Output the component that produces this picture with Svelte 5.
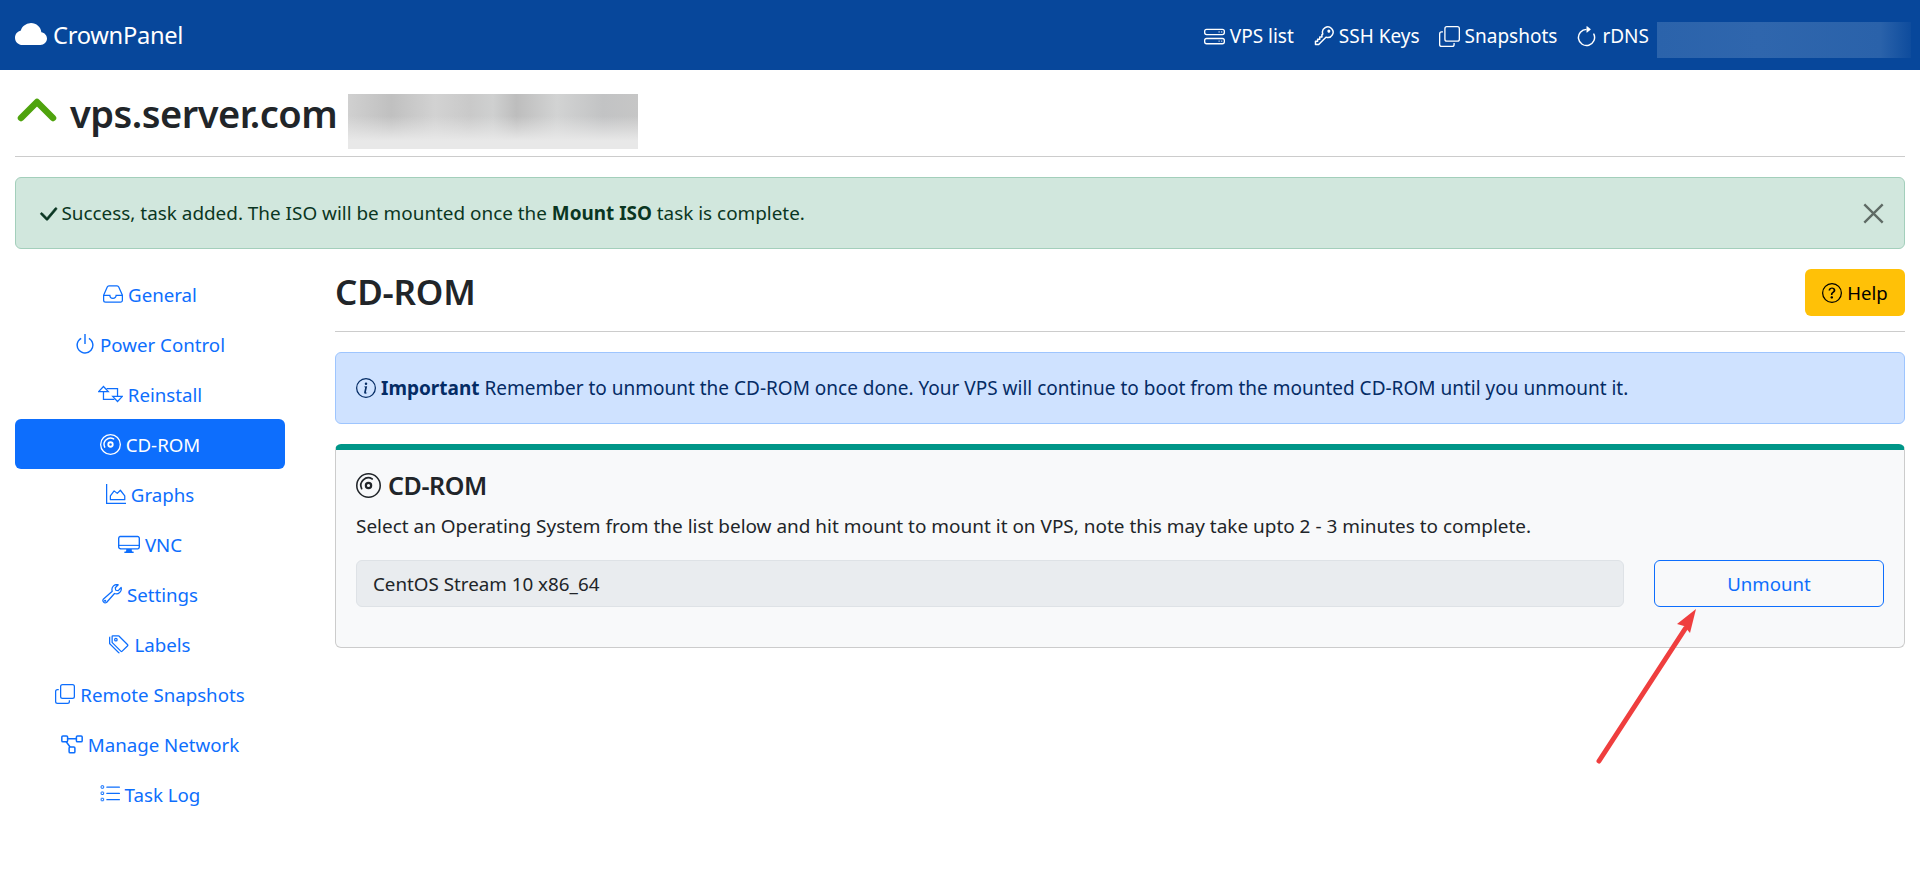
<script>
  const disc = '<path d="M8 15A7 7 0 1 1 8 1a7 7 0 0 1 0 14m0 1A8 8 0 1 0 8 0a8 8 0 0 0 0 16"/><path d="M10.4 8a2.4 2.4 0 1 1-4.8 0 2.4 2.4 0 0 1 4.8 0m-1.4 0a1 1 0 1 0-2 0 1 1 0 0 0 2 0"/><path d="M3.6 10A4.8 4.8 0 0 1 10.4 3.8" fill="none" stroke="currentColor" stroke-width="1.1" stroke-linecap="round"/>';
  const sidebar = [
    { label: 'General', icon: '<g fill="none" stroke="currentColor" stroke-width="1"><path d="M.5 9 3.4 2.4A1.5 1.5 0 0 1 4.8 1.5h6.4a1.5 1.5 0 0 1 1.4.9L15.5 9v4a1.5 1.5 0 0 1-1.5 1.5H2A1.5 1.5 0 0 1 .5 13Z"/><path d="M.5 9H5.5a2.5 2.5 0 0 0 5 0h5"/></g>' },
    { label: 'Power Control', vb: '1 1 14 14', icon: '<path d="M7.5 1v7h1V1z"/><path d="M3 8.812a5 5 0 0 1 2.578-4.375l-.485-.874A6 6 0 1 0 11 3.616l-.501.865A5 5 0 1 1 3 8.812"/>' },
    { label: 'Reinstall', w: 25, h: 20, vb: '0 1.6 16 12.8', icon: '<g fill="none" stroke="currentColor" stroke-width=".8"><path d="M.4 6.5 3.5 3.2 6.6 6.5Z"/><path d="M3.5 6.5V11.5H10.5"/><path d="M5.5 4.5H12.5V9.5"/><path d="M9.4 9.5 12.5 12.8 15.6 9.5Z"/></g>' },
    { label: 'CD-ROM', active: true, w: 21, h: 21, icon: disc },
    { label: 'Graphs', icon: '<g fill="none" stroke="currentColor" stroke-width="1"><path d="M.5 0V15.5H16"/><path d="M3.5 12.5V9.5L6.5 5.5 9 7.5 11.5 5 15 9.5V12.5Z" stroke-linejoin="round"/></g>' },
    { label: 'VNC', w: 22, h: 22, icon: '<path d="M0 4s0-2 2-2h12s2 0 2 2v6s0 2-2 2h-4q0 1 .25 1.5H11a.5.5 0 0 1 0 1H5a.5.5 0 0 1 0-1h.75Q6 13 6 12H2s-2 0-2-2zm1.398-.855a.76.76 0 0 0-.254.302A1.5 1.5 0 0 0 1 4.01V10c0 .325.078.502.145.602q.105.156.302.254a1.5 1.5 0 0 0 .538.143L2.01 11H14c.325 0 .502-.078.602-.145a.76.76 0 0 0 .254-.302 1.5 1.5 0 0 0 .143-.538L15 9.99V4c0-.325-.078-.502-.145-.602a.76.76 0 0 0-.302-.254A1.5 1.5 0 0 0 13.99 3H2c-.325 0-.502.078-.602.145"/><path d="M.5 8.6h15v.8H.5z"/>' },
    { label: 'Settings', icon: '<g fill="none" stroke="currentColor" stroke-width="1"><path d="M15.3 2.8A4 4 0 0 1 10 7.6L3.6 14.8A1.9 1.9 0 0 1 1 12.2L8.2 5.8A4 4 0 0 1 13 .6L10.6 3 11 5 13 5.3Z" stroke-linejoin="round"/><circle cx="2.5" cy="13.4" r=".4"/></g>' },
    { label: 'Labels', icon: '<path d="M3 2v4.586l7 7L14.586 9l-7-7zM2 2a1 1 0 0 1 1-1h4.586a1 1 0 0 1 .707.293l7 7a1 1 0 0 1 0 1.414l-4.586 4.586a1 1 0 0 1-1.414 0l-7-7A1 1 0 0 1 2 6.586z"/><path d="M5.5 5a.5.5 0 1 1 0-1 .5.5 0 0 1 0 1m0 1a1.5 1.5 0 1 0 0-3 1.5 1.5 0 0 0 0 3M1 7.086a1 1 0 0 0 .293.707L8.75 15.25l-.043.043a1 1 0 0 1-1.414 0l-7-7A1 1 0 0 1 0 7.586V3a1 1 0 0 1 1-1z"/>' },
    { label: 'Remote Snapshots', icon: '<path d="M4 2a2 2 0 0 1 2-2h8a2 2 0 0 1 2 2v8a2 2 0 0 1-2 2H6a2 2 0 0 1-2-2zm2-1a1 1 0 0 0-1 1v8a1 1 0 0 0 1 1h8a1 1 0 0 0 1-1V2a1 1 0 0 0-1-1zM2 5a1 1 0 0 0-1 1v8a1 1 0 0 0 1 1h8a1 1 0 0 0 1-1v-1h1v1a2 2 0 0 1-2 2H2a2 2 0 0 1-2-2V6a2 2 0 0 1 2-2h1v1z"/>' },
    { label: 'Manage Network', w: 22, h: 20, vb: '0 .2 16 14.5', icon: '<g fill="none" stroke="currentColor" stroke-width="1.1"><rect x=".6" y="1.6" width="4.2" height="4.2" rx=".8"/><rect x="11.2" y="1.6" width="4.2" height="4.2" rx=".8"/><rect x="5.9" y="9.6" width="4.2" height="4.2" rx=".8"/><path d="M4.8 3.7h6.4M3.8 5.8 6.6 9.6"/></g>' },
    { label: 'Task Log', icon: '<path d="M5 12.5a.5.5 0 0 1 .5-.5h10a.5.5 0 0 1 0 1h-10a.5.5 0 0 1-.5-.5m0-5a.5.5 0 0 1 .5-.5h10a.5.5 0 0 1 0 1h-10a.5.5 0 0 1-.5-.5m0-5a.5.5 0 0 1 .5-.5h10a.5.5 0 0 1 0 1h-10a.5.5 0 0 1-.5-.5"/><g fill="none" stroke="currentColor" stroke-width=".8"><rect x=".9" y="1.4" width="2" height="2" rx=".3"/><rect x=".9" y="6.4" width="2" height="2" rx=".3"/><rect x=".9" y="11.4" width="2" height="2" rx=".3"/></g>' }
  ];
  const topnav = [
    { label: 'VPS list', icon: '<path d="M14 10a1 1 0 0 1 1 1v1a1 1 0 0 1-1 1H2a1 1 0 0 1-1-1v-1a1 1 0 0 1 1-1zM2 9a2 2 0 0 0-2 2v1a2 2 0 0 0 2 2h12a2 2 0 0 0 2-2v-1a2 2 0 0 0-2-2z"/><path d="M14 3a1 1 0 0 1 1 1v1a1 1 0 0 1-1 1H2a1 1 0 0 1-1-1V4a1 1 0 0 1 1-1zM2 2a2 2 0 0 0-2 2v1a2 2 0 0 0 2 2h12a2 2 0 0 0 2-2V4a2 2 0 0 0-2-2z"/><path d="M14 4.5a.5.5 0 1 1-1 0 .5.5 0 0 1 1 0m-2 0a.5.5 0 1 1-1 0 .5.5 0 0 1 1 0M14 11.5a.5.5 0 1 1-1 0 .5.5 0 0 1 1 0m-2 0a.5.5 0 1 1-1 0 .5.5 0 0 1 1 0"/>' },
    { label: 'SSH Keys', icon: '<g transform="translate(8 8) scale(1.15) rotate(135) translate(-8 -8)"><path d="M0 8a4 4 0 0 1 7.465-2H14a.5.5 0 0 1 .354.146l1.5 1.5a.5.5 0 0 1 0 .708l-1.5 1.5a.5.5 0 0 1-.708 0L13 9.207l-.646.647a.5.5 0 0 1-.708 0L11 9.207l-.646.647a.5.5 0 0 1-.708 0L9 9.207l-.646.647A.5.5 0 0 1 8 10h-.535A4 4 0 0 1 0 8m4-3a3 3 0 1 0 2.712 4.285A.5.5 0 0 1 7.163 9h.63l.853-.854a.5.5 0 0 1 .708 0l.646.647.646-.647a.5.5 0 0 1 .708 0l.646.647.646-.647a.5.5 0 0 1 .708 0l.646.647.793-.793-1-1h-6.63a.5.5 0 0 1-.451-.285A3 3 0 0 0 4 5"/><path d="M4 8a1 1 0 1 1-2 0 1 1 0 0 1 2 0"/></g>' },
    { label: 'Snapshots', icon: '<path d="M4 2a2 2 0 0 1 2-2h8a2 2 0 0 1 2 2v8a2 2 0 0 1-2 2H6a2 2 0 0 1-2-2zm2-1a1 1 0 0 0-1 1v8a1 1 0 0 0 1 1h8a1 1 0 0 0 1-1V2a1 1 0 0 0-1-1zM2 5a1 1 0 0 0-1 1v8a1 1 0 0 0 1 1h8a1 1 0 0 0 1-1v-1h1v1a2 2 0 0 1-2 2H2a2 2 0 0 1-2-2V6a2 2 0 0 1 2-2h1v1z"/>' },
    { label: 'rDNS', vb: '1.5 .2 13 14.3', icon: '<path d="M8 3a5 5 0 1 0 4.546 2.914.5.5 0 0 1 .908-.417A6 6 0 1 1 8 2z"/><path d="M8 4.466V.534a.25.25 0 0 1 .41-.192l2.36 1.966c.12.1.12.284 0 .384L8.41 4.658A.25.25 0 0 1 8 4.466"/>' }
  ];
</script>

<header class="topbar">
  <div class="brand">
    <svg class="bi brand-icon" viewBox="0 0 16 16"><path d="M4.406 3.342A5.53 5.53 0 0 1 8 2c2.69 0 4.923 2 5.166 4.579C14.758 6.804 16 8.137 16 9.773 16 11.569 14.502 13 12.687 13H3.781C1.708 13 0 11.366 0 9.318c0-1.763 1.266-3.223 2.942-3.593.143-.863.698-1.723 1.464-2.383"/></svg>
    <span>CrownPanel</span>
  </div>
  <nav class="topnav">
    {#each topnav as item}
      <span class="toplink"><svg class="bi" viewBox={item.vb ?? '0 0 16 16'}>{@html item.icon}</svg>{item.label}</span>
    {/each}
    <div class="nav-blur"></div>
  </nav>
</header>

<main class="page">
  <div class="host">
    <svg class="chev" viewBox="0 0 40 26"><path d="M4 21 20 5 36 21" fill="none" stroke="#4fa30e" stroke-width="6.5" stroke-linecap="round" stroke-linejoin="round"/></svg>
    <h1>vps.server.com</h1>
    <div class="host-blur"></div>
  </div>

  <div class="alert success">
    <span class="msg"><svg class="bi check" viewBox="0 0 16 16"><path d="M12.736 3.97a.733.733 0 0 1 1.047 0c.286.289.29.756.01 1.05L7.88 12.01a.733.733 0 0 1-1.065.02L3.217 8.384a.757.757 0 0 1 0-1.06.733.733 0 0 1 1.047 0l3.052 3.093 5.4-6.425z"/></svg> Success, task added. The ISO will be mounted once the <b>Mount ISO</b> task is complete.</span>
    <svg class="close" viewBox="0 0 16 16"><path d="M1 1 15 15M15 1 1 15" stroke="#5f6b65" stroke-width="1.8" fill="none"/></svg>
  </div>

  <div class="columns">
    <aside class="side">
      {#each sidebar as item}
        <div class="side-item" class:active={item.active}>
          <svg class="bi" viewBox={item.vb ?? '0 0 16 16'} style:width={item.w ? `${item.w}px` : null} style:height={item.h ? `${item.h}px` : null}>{@html item.icon}</svg>{item.label}
        </div>
      {/each}
    </aside>

    <section class="content">
      <div class="title-row">
        <h2>CD-ROM</h2>
        <button class="help"><svg class="bi" viewBox="0 0 16 16"><path d="M8 15A7 7 0 1 1 8 1a7 7 0 0 1 0 14m0 1A8 8 0 1 0 8 0a8 8 0 0 0 0 16"/><path d="M5.255 5.786a.237.237 0 0 0 .241.247h.825c.138 0 .248-.113.266-.25.09-.656.54-1.134 1.342-1.134.686 0 1.314.343 1.314 1.168 0 .635-.374.927-.965 1.371-.673.489-1.206 1.06-1.168 1.987l.003.217a.25.25 0 0 0 .25.246h.811a.25.25 0 0 0 .25-.25v-.105c0-.718.273-.927 1.01-1.486.609-.463 1.244-.977 1.244-2.056 0-1.511-1.276-2.241-2.673-2.241-1.267 0-2.655.59-2.75 2.286m1.557 5.763c0 .533.425.927 1.01.927.609 0 1.028-.394 1.028-.927 0-.552-.42-.94-1.029-.94-.584 0-1.009.388-1.009.94"/></svg>Help</button>
      </div>

      <div class="alert info">
        <svg class="bi" viewBox="0 0 16 16"><path d="M8 15A7 7 0 1 1 8 1a7 7 0 0 1 0 14m0 1A8 8 0 1 0 8 0a8 8 0 0 0 0 16"/><path d="m8.93 6.588-2.29.287-.082.38.45.083c.294.07.352.176.288.469l-.738 3.468c-.194.897.105 1.319.808 1.319.545 0 1.178-.252 1.465-.598l.088-.42c-.2.176-.492.246-.686.246-.275 0-.375-.193-.304-.533zM9 4.5a1 1 0 1 1-2 0 1 1 0 0 1 2 0"/></svg>
        <span class="msg"><b>Important</b> Remember to unmount the CD-ROM once done. Your VPS will continue to boot from the mounted CD-ROM until you unmount it.</span>
      </div>

      <div class="card">
        <h3><svg class="bi" viewBox="0 0 16 16">{@html disc}</svg>CD-ROM</h3>
        <p>Select an Operating System from the list below and hit mount to mount it on VPS, note this may take upto 2 - 3 minutes to complete.</p>
        <div class="mount-row">
          <div class="field">CentOS Stream 10 x86_64</div>
          <button class="unmount">Unmount</button>
        </div>
      </div>
    </section>
  </div>

  <svg class="arrow" viewBox="0 0 120 170"><path d="M6 159 92 27" stroke="#ef3e3e" stroke-width="5" stroke-linecap="round"/><path d="M103 7 84 22 91 24 97 31Z" fill="#ef3e3e"/></svg>
</main>

<style>
  :global(body) {
    margin: 0;
    background: #fff;
    color: #212529;
    font-family: "Noto Sans", "Open Sans", sans-serif;
    font-size: 19px;
  }
  .bi { width: 1em; height: 1em; fill: currentColor; fill-rule: evenodd; flex: none; display: inline-block; }
  .topbar {
    height: 70px;
    background: #07479b;
    color: #fff;
    display: flex;
    align-items: center;
    justify-content: space-between;
    padding: 0 9px 0 15px;
  }
  .brand { display: flex; align-items: center; gap: 6px; font-size: 23.7px; letter-spacing: -.3px; }
  .brand-icon { width: 32px; height: 32px; }
  .topnav { display: flex; align-items: center; gap: 19px; }
  .toplink { display: inline-flex; align-items: center; gap: 5px; padding-top: 2px; }
  .toplink .bi { width: 21px; height: 21px; }
  .nav-blur {
    width: 254px;
    height: 36px;
    margin: 9px 0 0 -11px;
    background: linear-gradient(90deg, #2b63ab 0, #2f66ad 40%, #2a62aa 88%, #0e4c9d 100%);
  }
  .page { padding: 0 15px; position: relative; }
  .host {
    height: 86px;
    border-bottom: 1px solid #ccc;
    display: flex;
    align-items: center;
    gap: 11px;
  }
  .chev { width: 40px; height: 26px; margin: -6px 2px 0 2px; }
  h1 { font-size: 38px; font-weight: 600; margin: 0; letter-spacing: -.5px; }
  .host-blur {
    width: 290px;
    height: 55px;
    margin-top: 17px;
    background:
      linear-gradient(180deg, #e8e8e800 0, #e8e8e800 40%, #e8e8e8 85%),
      linear-gradient(90deg, #d0d0d0, #c0c0c0 15%, #d2d2d2 30%, #c9c9c9 42%, #cfd0d0 50%, #bdbdbd 58%, #d2d3d3 72%, #c2c3c4 88%, #c6c6c6);
  }
  .alert {
    box-sizing: border-box;
    height: 72px;
    border-radius: 6px;
    border: 1px solid;
    display: flex;
    align-items: center;
    padding: 0 20px;
  }
  .success {
    margin-top: 20px;
    background: #d1e7dd;
    border-color: #a3cfbb;
    color: #0a3622;
    justify-content: space-between;
    font-size: 18.9px;
  }
  .check { width: 24px; height: 24px; vertical-align: -6px; margin-right: -3.5px; stroke: currentColor; stroke-width: .4; }
  .close { width: 21px; height: 21px; }
  .columns { display: flex; gap: 50px; margin-top: 20px; }
  .side { width: 270px; flex: none; }
  .side-item {
    height: 50px;
    border-radius: 6px;
    color: #0d6efd;
    font-size: 18.7px;
    display: flex;
    align-items: center;
    justify-content: center;
    gap: 5px;
  }
  .side-item .bi { width: 20px; height: 20px; }
  .side-item.active { background: #0d6efd; color: #fff; }
  .content { flex: 1; min-width: 0; }
  .title-row {
    height: 62px;
    display: flex;
    align-items: flex-start;
    justify-content: space-between;
    border-bottom: 1px solid #ccc;
  }
  h2 { font-size: 35px; font-weight: 600; margin: 0; line-height: 46px; letter-spacing: -.2px; }
  .help {
    width: 100px;
    height: 47px;
    background: #ffc107;
    border: 0;
    border-radius: 6px;
    font: inherit;
    font-size: 18.6px;
    color: #000;
    display: flex;
    align-items: center;
    justify-content: center;
    gap: 5px;
  }
  .help .bi { width: 20px; height: 20px; }
  .info {
    margin-top: 20px;
    background: #cfe2ff;
    border-color: #9ec5fe;
    color: #052c65;
    gap: 5px;
  }
  .info .bi { width: 20px; height: 20px; }
  .card {
    margin-top: 20px;
    box-sizing: border-box;
    height: 204px;
    background: #f8f9fa;
    border: 1px solid #ccc;
    border-top: 6px solid #009688;
    border-radius: 6px;
    padding: 19px 20px;
  }
  h3 { font-size: 25px; font-weight: 600; margin: 0; display: flex; align-items: center; gap: 7px; line-height: 33px; letter-spacing: -.4px; }
  h3 .bi { width: 25px; height: 25px; }
  p { margin: 11px 0 0; line-height: 27px; font-size: 18.97px; }
  .mount-row { display: flex; gap: 30px; margin-top: 20px; }
  .field {
    flex: 1;
    height: 47px;
    box-sizing: border-box;
    background: #e9ecef;
    border: 1px solid #dee2e6;
    border-radius: 6px;
    padding: 0 16px;
    font-size: 18.8px;
    display: flex;
    align-items: center;
  }
  .unmount {
    width: 230px;
    height: 47px;
    background: transparent;
    border: 1px solid #0d6efd;
    border-radius: 6px;
    color: #0d6efd;
    font: inherit;
    font-size: 18.6px;
  }
  .arrow { position: absolute; left: 1593px; top: 532px; width: 120px; height: 170px; }
</style>
